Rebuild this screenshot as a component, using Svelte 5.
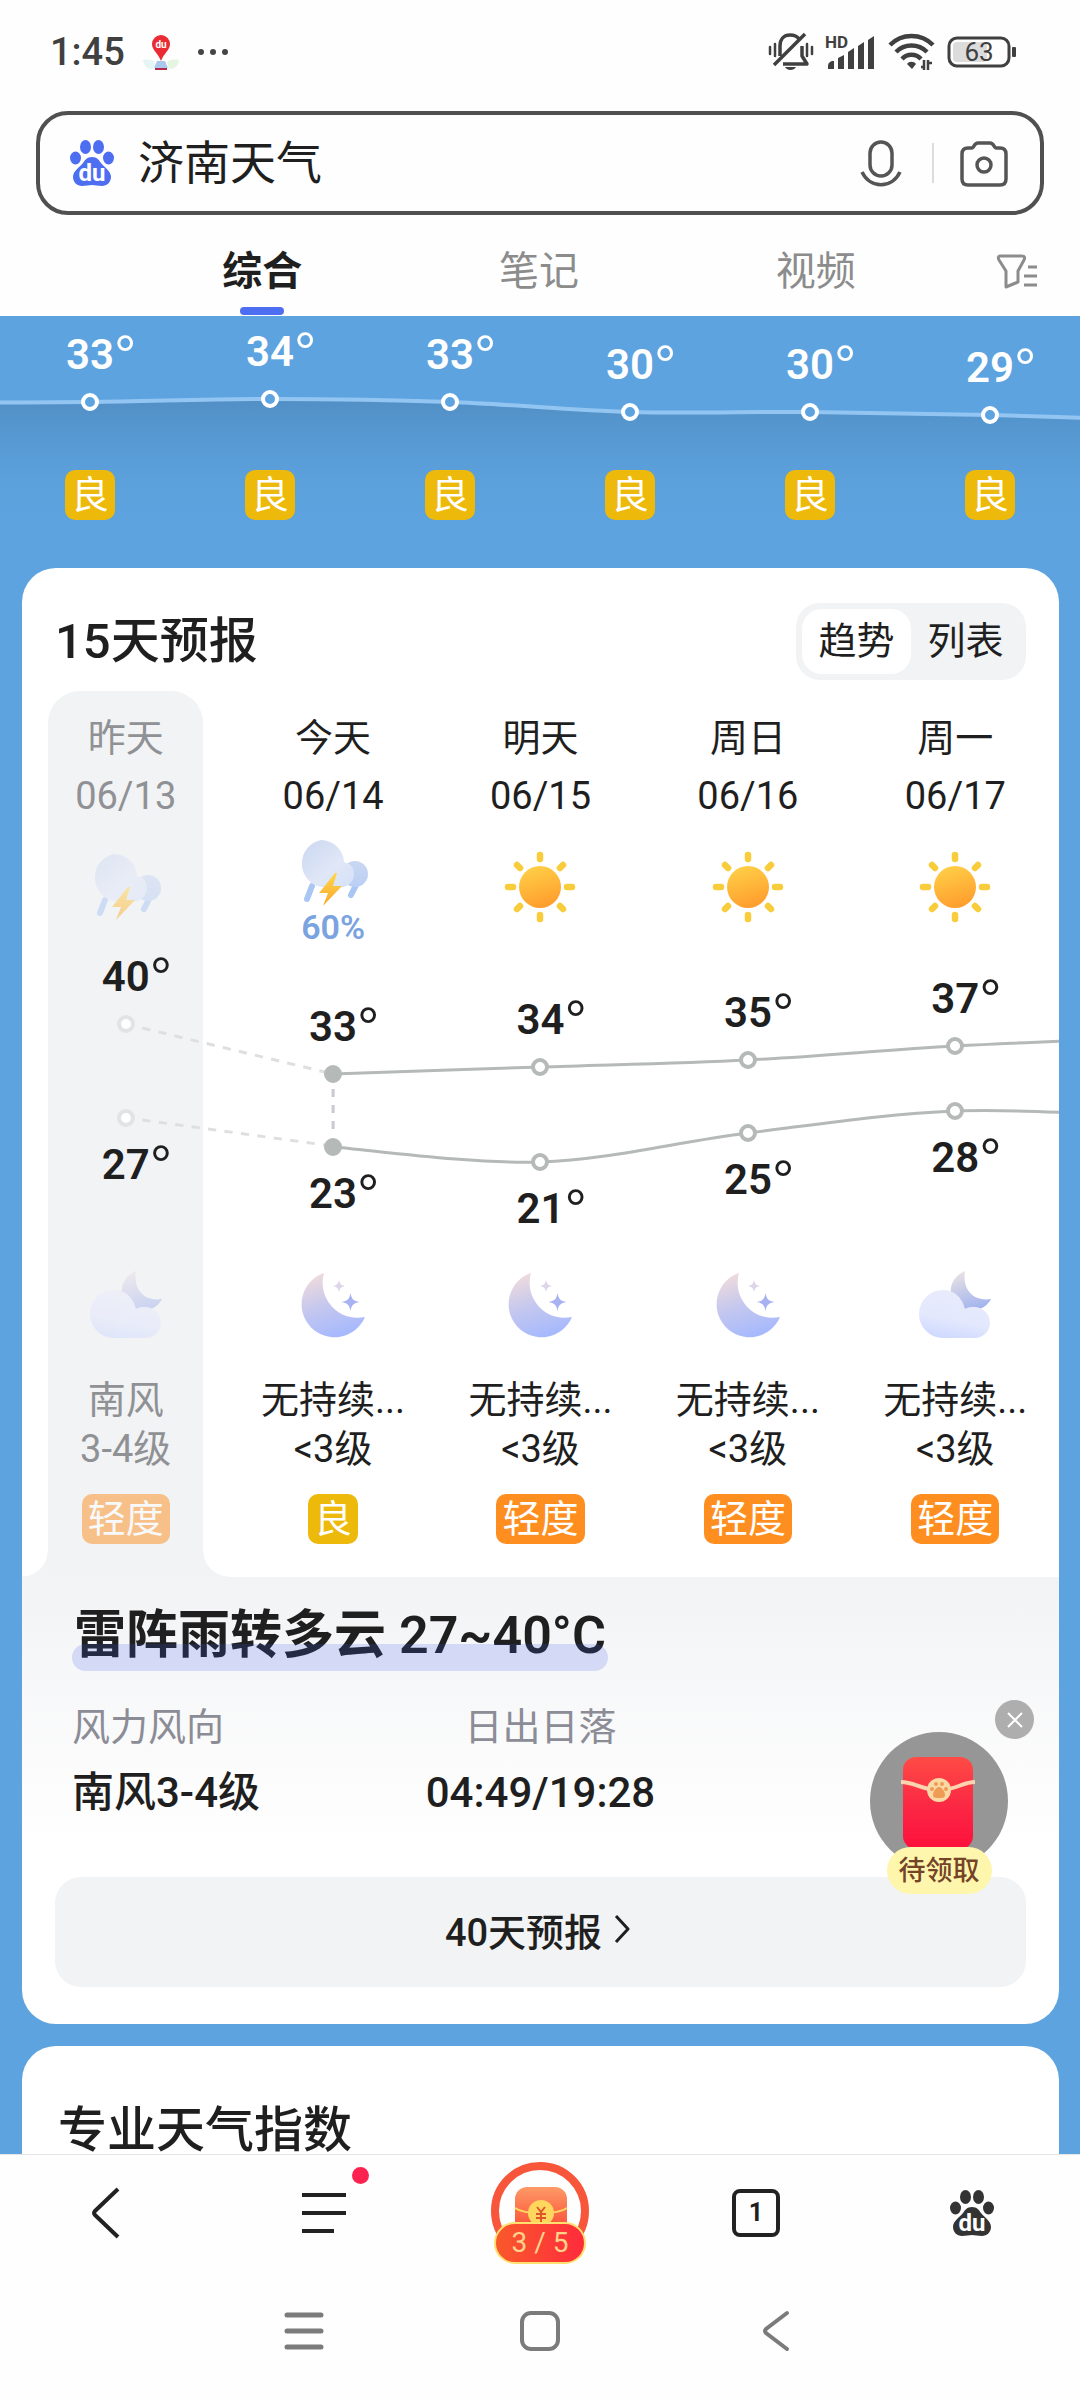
<script>
    let query = $state("济南天气");
    let activeTab = $state("综合");
    let view = $state("趋势");
    let activeDay = $state(0);
    let showGift = $state(true);

    const tabs = ["综合", "笔记", "视频"];
    const views = ["趋势", "列表"];

    const hours = [
        { temp: 33, y: 86, air: "良" },
        { temp: 34, y: 83, air: "良" },
        { temp: 33, y: 86, air: "良" },
        { temp: 30, y: 96, air: "良" },
        { temp: 30, y: 96, air: "良" },
        { temp: 29, y: 99, air: "良" },
    ];

    const days = [
        { name: "昨天", date: "06/13", icon: "storm", high: 40, low: 27, highY: 79, lowY: 173, night: "cloud", wind: "南风", level: "3-4级", air: "轻度", past: true },
        { name: "今天", date: "06/14", icon: "storm", rain: "60%", high: 33, low: 23, highY: 129, lowY: 202, night: "moon", wind: "无持续...", level: "<3级", air: "良", today: true },
        { name: "明天", date: "06/15", icon: "sun", high: 34, low: 21, highY: 122, lowY: 217, night: "moon", wind: "无持续...", level: "<3级", air: "轻度" },
        { name: "周日", date: "06/16", icon: "sun", high: 35, low: 25, highY: 115, lowY: 188, night: "moon", wind: "无持续...", level: "<3级", air: "轻度" },
        { name: "周一", date: "06/17", icon: "sun", high: 37, low: 28, highY: 101, lowY: 166, night: "cloud", wind: "无持续...", level: "<3级", air: "轻度" },
    ];

    // smooth curve through evenly spaced points
    function curve(points) {
        let d = `M${points[0][0]} ${points[0][1]}`;
        for (let i = 0; i < points.length - 1; i++) {
            const a = points[i];
            const b = points[i + 1];
            const prev = points[i - 1] || a;
            const next = points[i + 2] || b;
            const c1 = [a[0] + (b[0] - prev[0]) / 6, a[1] + (b[1] - prev[1]) / 6];
            const c2 = [b[0] - (next[0] - a[0]) / 6, b[1] - (next[1] - a[1]) / 6];
            d += ` C${c1.join(" ")} ${c2.join(" ")} ${b.join(" ")}`;
        }
        return d;
    }

    const hourLine = curve([
        [-90, 87],
        ...hours.map((h, i) => [90 + i * 180, h.y]),
        [1170, 105],
    ]);

    const dayX = (i) => 100 + i * 200;
    const futureDays = days.slice(1);
    const highLine = curve([...futureDays.map((d, i) => [dayX(i + 1), d.highY]), [1100, 92]]);
    const lowLine = curve([...futureDays.map((d, i) => [dayX(i + 1), d.lowY]), [1100, 172]]);
</script>

{#snippet paw(color)}
    <svg class="paw" viewBox="0 0 44 46" aria-hidden="true">
        <g fill={color}>
            <ellipse cx="15.500" cy="7" rx="5.500" ry="7" />
            <ellipse cx="28.500" cy="7" rx="5.500" ry="7" />
            <ellipse cx="5.500" cy="18" rx="5.500" ry="6.500" />
            <ellipse cx="38.500" cy="18" rx="5.500" ry="6.500" />
            <path d="M22 17c5 0 7 3 9 6 3 4 10 8 10 14 0 5-4 9-9 9-4 0-7-1-10-1s-6 1-10 1c-5 0-9-4-9-9 0-6 7-10 10-14 2-3 4-6 9-6z" />
        </g>
        <text x="22" y="41" text-anchor="middle" fill="#fff">du</text>
    </svg>
{/snippet}

{#snippet weatherIcon(name)}
    <svg class="weather-icon" viewBox="0 0 72 72" aria-hidden="true">
        {#if name === "storm"}
            <path d="M15 49l-5 13M60 46l-6 12" stroke="#a9c6f4" stroke-width="6" stroke-linecap="round" />
            <circle cx="58" cy="37" r="13" fill="url(#puff)" />
            <path d="M24 3a23 23 0 0 1 23 22c8 2 10 7 10 12 0 7-5 12-11 13H24a24 24 0 0 1 0-47z" fill="url(#cloud)" />
            <path d="M38 36L22 56h9l-5 13 19-20h-9l4-13z" fill="url(#bolt)" />
        {:else if name === "sun"}
            <path
                d="M36 4v4M36 64v4M4 36h5M63 36h5M13 14l3 3M56 55l3 3M59 14l-3 3M16 55l-3 3"
                stroke="#f8cc3a"
                stroke-width="6.500"
                stroke-linecap="round"
            />
            <circle cx="36" cy="36" r="21" fill="url(#sun)" />
        {:else if name === "moon"}
            <path d="M27 4A33 33 0 1 0 68 48A35 35 0 0 1 27 4z" fill="url(#moon)" />
            <path d="M53.500 24c1 6 3 8 9 9-6 1-8 3-9 9-1-6-3-8-9-9 6-1 8-3 9-9z" fill="#a7b2f2" />
            <path d="M42 11c1 4 2 5 6 6-4 1-5 2-6 6-1-4-2-5-6-6 4-1 5-2 6-6z" fill="#dcd6e8" />
        {:else}
            <path d="M46 2C24 11 28 42 54 42C62 41 69 36 72 30C53 33 43 19 46 2z" fill="url(#moon-small)" />
            <path d="M24 21c11 0 19 7 22 19 3-2 6-2 9-2 9 0 16 7 16 16 0 8-7 15-15 15H24a24 24 0 0 1 0-48z" fill="url(#night-cloud)" />
        {/if}
    </svg>
{/snippet}

{#snippet temp(value)}
    <span class="temp">{value}<span class="degree">°</span></span>
{/snippet}

<svg class="defs" aria-hidden="true">
    <defs>
        <linearGradient id="cloud" x1="0" y1="0" x2="1" y2="1">
            <stop offset="0" stop-color="#cbd8f1" />
            <stop offset="0.600" stop-color="#e0e7f7" />
            <stop offset="1" stop-color="#d5e1f8" />
        </linearGradient>
        <linearGradient id="puff" x1="0" y1="0" x2="0" y2="1">
            <stop offset="0" stop-color="#cad7f1" />
            <stop offset="1" stop-color="#bacff5" />
        </linearGradient>
        <linearGradient id="bolt" x1="0" y1="0" x2="0" y2="1">
            <stop offset="0" stop-color="#ffd84a" />
            <stop offset="1" stop-color="#fba62f" />
        </linearGradient>
        <linearGradient id="sun" x1="0.300" y1="0" x2="0.600" y2="1">
            <stop offset="0" stop-color="#ffcf47" />
            <stop offset="1" stop-color="#ff9c2c" />
        </linearGradient>
        <linearGradient id="moon" x1="0.200" y1="0" x2="0.500" y2="1">
            <stop offset="0" stop-color="#f2dcdb" />
            <stop offset="0.500" stop-color="#c6c8ee" />
            <stop offset="1" stop-color="#a6b9fd" />
        </linearGradient>
        <linearGradient id="moon-small" x1="0.300" y1="0" x2="0.600" y2="1">
            <stop offset="0" stop-color="#e9e1e4" />
            <stop offset="0.500" stop-color="#c3c9e9" />
            <stop offset="1" stop-color="#a0b2ee" />
        </linearGradient>
        <linearGradient id="night-cloud" x1="0.600" y1="0" x2="0.300" y2="1">
            <stop offset="0" stop-color="#e9ebfb" />
            <stop offset="0.600" stop-color="#e3e8fd" />
            <stop offset="1" stop-color="#ced9ff" />
        </linearGradient>
        <linearGradient id="envelope" x1="0" y1="0" x2="0" y2="1">
            <stop offset="0" stop-color="#ff4b45" />
            <stop offset="0.500" stop-color="#fb2a44" />
            <stop offset="1" stop-color="#fe0f3c" />
        </linearGradient>
        <linearGradient id="packet" x1="0" y1="0" x2="0" y2="1">
            <stop offset="0" stop-color="#ff9a66" />
            <stop offset="1" stop-color="#f8402f" />
        </linearGradient>
        <linearGradient id="shade" x1="0" y1="0" x2="0" y2="1">
            <stop offset="0" stop-color="#4f8bc0" stop-opacity="0.850" />
            <stop offset="1" stop-color="#5ba3de" stop-opacity="0" />
        </linearGradient>
    </defs>
</svg>

<div class="app">
    <header>
        <div class="status-bar">
            <span class="clock">1:45</span>
            <svg class="map-pin" viewBox="0 0 36 36" aria-hidden="true">
                <path d="M0 25c6-1 10 0 12 2l-2 7c-6 0-9-3-10-9z" fill="#e4f5f3" />
                <path d="M36 25c-6-1-10 0-12 2l2 7c6 0 9-3 10-9z" fill="#e6f4e2" />
                <path d="M14 26h8l3 7H11z" fill="#a9c8ec" />
                <path d="M12 33h12v2H12z" fill="#b5284a" />
                <path d="M18 0a9 9 0 0 1 9 9c0 6-6 9-9 17-3-8-9-11-9-17a9 9 0 0 1 9-9z" fill="#ea2b33" />
                <text x="18" y="13" text-anchor="middle" fill="#fff">du</text>
            </svg>
            <svg class="more" viewBox="0 0 32 8" fill="#454545" aria-hidden="true">
                <circle cx="4" cy="4" r="3" /><circle cx="16" cy="4" r="3" /><circle cx="28" cy="4" r="3" />
            </svg>
            <div class="status-icons">
                <svg width="46" height="40" viewBox="0 0 46 40" fill="none" stroke="#404040" stroke-width="3.500" aria-hidden="true">
                    <path d="M12 24V14C12 7 16 3 22 3c4 0 7 1 9 4M34 14v10l5 8H15M6 33L37 2" stroke-linejoin="round" />
                    <path d="M2 15v7M7 12v12M39 12v12M44 15v7" stroke-width="2.500" stroke-linecap="round" />
                    <path d="M17 35h11c-2 4-9 4-11 0z" fill="#404040" stroke="none" />
                </svg>
                <svg width="52" height="40" viewBox="0 -4 52 40" fill="#404040" aria-hidden="true">
                    <text x="0" y="12">HD</text>
                    <path d="M3 33v-3c0-3 2-5 6-5v8zM13 33V22l6-3v14zM23 33V16l6-4v21zM33 33V10l6-4v27zM43 33V4l6-4v33z" />
                </svg>
                <svg width="48" height="38" viewBox="0 0 48 38" fill="none" stroke="#404040" stroke-width="4.500" aria-hidden="true">
                    <path d="M2 12a30 30 0 0 1 43 0M8 19a22 22 0 0 1 31 0M14 26a13 13 0 0 1 19 0" />
                    <path d="M19 31c2-3 7-3 9 0l-4 5z" fill="#404040" stroke="none" />
                    <path d="M36 27v10M33 34h3M40 37V27M40 30h4" stroke-width="2.500" />
                </svg>
                <svg class="battery" width="70" height="32" viewBox="0 0 70 32" aria-hidden="true">
                    <rect x="6" y="6" width="34" height="20" rx="4" fill="#dcdcdc" />
                    <rect x="2" y="2" width="60" height="28" rx="8" fill="none" stroke="#404040" stroke-width="3" />
                    <rect x="65" y="11" width="4" height="10" rx="1" fill="#404040" />
                    <text x="32" y="25" text-anchor="middle" fill="#404040">63</text>
                </svg>
            </div>
        </div>

        <form class="search" onsubmit={(e) => e.preventDefault()}>
            {@render paw("#4e6ef2")}
            <input type="text" aria-label="搜索" bind:value={query} />
            <button type="button" class="icon-button" aria-label="语音搜索">
                <svg width="44" height="48" viewBox="0 0 44 48" fill="none" stroke="#555" stroke-width="3.500" aria-hidden="true">
                    <rect x="11" y="3" width="22" height="34" rx="11" />
                    <path d="M3 33c8 17 30 17 38 0" />
                </svg>
            </button>
            <span class="divider"></span>
            <button type="button" class="icon-button" aria-label="拍照搜索">
                <svg width="48" height="48" viewBox="0 0 48 48" fill="none" stroke="#555" stroke-width="3.500" aria-hidden="true">
                    <path d="M8 9h4c2 0 2-5 6-5h12c4 0 4 5 6 5h4c4 0 6 2 6 6v25c0 4-2 6-6 6H8c-4 0-6-2-6-6V15c0-4 2-6 6-6z" />
                    <circle cx="24" cy="26" r="7" />
                </svg>
            </button>
        </form>

        <nav class="tabs">
            {#each tabs as tab}
                <button class="tab" class:active={tab === activeTab} onclick={() => (activeTab = tab)}>{tab}</button>
            {/each}
            <button class="filter" aria-label="筛选">
                <svg width="42" height="38" viewBox="0 0 42 38" fill="none" stroke="#8c8c8c" stroke-width="3" aria-hidden="true">
                    <path d="M4 3h22c3 0 3 2 2 4l-6 11v11l-12 5V18L3 7C2 5 2 3 4 3z" stroke-linejoin="round" />
                    <path d="M32 14h9M28 23h13M28 32h13" />
                </svg>
            </button>
        </nav>
    </header>

    <main>
        <section class="hourly">
            <svg class="hour-chart" viewBox="0 0 1080 210" preserveAspectRatio="none" aria-hidden="true">
                <path d={`${hourLine} V210 H-90z`} fill="url(#shade)" />
                <path d={hourLine} fill="none" stroke="#93c5f2" stroke-width="4" vector-effect="non-scaling-stroke" />
            </svg>
            {#each hours as hour}
                <div class="hour">
                    <div class="hour-point" style="padding-top: {hour.y - 71}px">
                        {@render temp(hour.temp)}
                        <span class="dot"></span>
                    </div>
                    <span class="badge">{hour.air}</span>
                </div>
            {/each}
        </section>

        <section class="card forecast">
            <div class="card-head">
                <h2>15天预报</h2>
                <div class="switch">
                    {#each views as name}
                        <button class:selected={view === name} onclick={() => (view = name)}>{name}</button>
                    {/each}
                </div>
            </div>

            <div class="days">
                {#each days as day, i}
                    <div class="day" class:past={day.past} class:today={day.today} class:active={i === activeDay}>
                        <span class="day-name">{day.name}</span>
                        <span class="day-name">{day.date}</span>
                        <div class="day-icon">
                            {@render weatherIcon(day.icon)}
                            {#if day.rain}
                                <span class="rain">{day.rain}</span>
                            {/if}
                        </div>
                        <div class="temps">
                            <div class="point high" style="top: {day.highY}px">
                                {@render temp(day.high)}
                                <span class="dot"></span>
                            </div>
                            <div class="point low" style="top: {day.lowY}px">
                                <span class="dot"></span>
                                {@render temp(day.low)}
                            </div>
                        </div>
                        {@render weatherIcon(day.night)}
                        <p class="wind">{day.wind}<br />{day.level}</p>
                        <span class="badge" class:light={day.air === "轻度"}>{day.air}</span>
                    </div>
                {/each}
                <svg class="day-chart" viewBox="0 0 1000 324" preserveAspectRatio="none" aria-hidden="true">
                    <g fill="none" stroke-width="3">
                        <path d="M116 83L292 127M116 175L292 200" stroke="#dedfe0" stroke-dasharray="8 8" />
                        <path d="M300 144V188" stroke="#cbcccf" stroke-dasharray="8 8" />
                        <path d={highLine} stroke="#b5b9b8" />
                        <path d={lowLine} stroke="#b5b9b8" />
                    </g>
                </svg>
            </div>

            <div class="detail">
                <h3>雷阵雨转多云 <span>27~40°C</span></h3>
                <dl>
                    <div>
                        <dt>风力风向</dt>
                        <dd>南风3-4级</dd>
                    </div>
                    <div class="sunrise">
                        <dt>日出日落</dt>
                        <dd>04:49/19:28</dd>
                    </div>
                </dl>
            </div>

            <button class="long-forecast">
                40天预报
                <svg width="16" height="30" viewBox="0 0 16 30" fill="none" stroke="#1f1f1f" stroke-width="3" aria-hidden="true">
                    <path d="M2 2l12 13L2 28" stroke-linejoin="round" />
                </svg>
            </button>
        </section>

        <section class="card indices">
            <h2>专业天气指数</h2>
        </section>
    </main>

    {#if showGift}
        <aside class="gift">
            <button class="gift-open">
                <svg width="138" height="138" viewBox="0 0 138 138" aria-hidden="true">
                    <circle cx="69" cy="69" r="69" fill="#969696" />
                    <rect x="33" y="25" width="70" height="92" rx="13" fill="url(#envelope)" />
                    <path d="M31 50c14 0 20 8 38 8s23-8 36-8" fill="none" stroke="#fbd3ae" stroke-width="4" />
                    <circle cx="69" cy="58" r="12" fill="#fbd9a4" />
                    <g fill="#ef9a55">
                        <circle cx="66" cy="52" r="2" /><circle cx="72" cy="52" r="2" />
                        <circle cx="62" cy="57" r="2" /><circle cx="76" cy="57" r="2" />
                        <path d="M69 55c3 0 6 5 6 8s-3 3-6 3-6 0-6-3 3-8 6-8z" />
                    </g>
                </svg>
                <span>待领取</span>
            </button>
            <button class="gift-close" aria-label="关闭" onclick={() => (showGift = false)}>
                <svg width="16" height="16" viewBox="0 0 16 16" stroke="#fff" stroke-width="2" aria-hidden="true">
                    <path d="M1 1l14 14M15 1L1 15" />
                </svg>
            </button>
        </aside>
    {/if}

    <footer>
        <nav class="toolbar">
            <button aria-label="返回">
                <svg width="36" height="52" viewBox="0 0 36 52" fill="none" stroke="#222" stroke-width="4" aria-hidden="true">
                    <path d="M28 2L5 24q-2 2 0 4l23 22" />
                </svg>
            </button>
            <button aria-label="菜单" class="menu">
                <svg width="44" height="44" viewBox="0 0 44 44" stroke="#222" stroke-width="4" aria-hidden="true">
                    <path d="M0 4h44M0 22h44M0 40h32" />
                </svg>
                <span class="red-dot"></span>
            </button>
            <button class="reward">
                <svg width="98" height="98" viewBox="0 0 98 98" aria-hidden="true">
                    <circle cx="49" cy="49" r="45" fill="none" stroke="#f8563b" stroke-width="8" />
                    <rect x="24" y="25" width="52" height="50" rx="12" fill="url(#packet)" />
                    <path d="M24 46c10 7 42 7 52 0" fill="none" stroke="#ffd75e" stroke-width="2" />
                    <circle cx="50" cy="51" r="13" fill="#ffd75e" />
                    <path d="M46 45l4 5 4-5M50 50v11M45 52h10M45 56h10" fill="none" stroke="#e0552a" stroke-width="2" />
                </svg>
                <span>3 / 5</span>
            </button>
            <button class="windows"><span>1</span></button>
            <button aria-label="百度首页">{@render paw("#333")}</button>
        </nav>
        <nav class="system">
            <button aria-label="最近任务">
                <svg width="40" height="40" viewBox="0 0 40 40" stroke="#7b7b7b" stroke-width="5" stroke-linecap="round" aria-hidden="true">
                    <path d="M3 4h34M3 20h34M3 36h34" />
                </svg>
            </button>
            <button aria-label="主屏幕">
                <svg width="42" height="42" viewBox="0 0 42 42" fill="none" stroke="#7b7b7b" stroke-width="4" aria-hidden="true">
                    <rect x="3" y="3" width="36" height="36" rx="9" />
                </svg>
            </button>
            <button aria-label="后退">
                <svg width="28" height="42" viewBox="0 0 28 42" fill="none" stroke="#7b7b7b" stroke-width="4" stroke-linecap="round" aria-hidden="true">
                    <path d="M25 3L4 19q-2 2 0 4l21 16" />
                </svg>
            </button>
        </nav>
    </footer>
</div>

<style>
    :global(body) {
        margin: 0;
        background: #fdfdfd;
    }

    .app {
        position: relative;
        display: flex;
        flex-direction: column;
        height: 100vh;
        overflow: hidden;
        color: #1f1f1f;
        font-family: Roboto, "Noto Sans CJK SC", sans-serif;
        font-size: 38px;
    }

    button {
        margin: 0;
        padding: 0;
        border: 0;
        background: none;
        color: inherit;
        font: inherit;
        cursor: pointer;
    }

    svg {
        display: block;
    }

    h2,
    h3,
    p,
    dl,
    dd {
        margin: 0;
    }

    .defs {
        position: absolute;
        width: 0;
        height: 0;
    }

    header,
    footer {
        flex: none;
        background: #fefefe;
    }

    /* status bar */
    .status-bar {
        display: flex;
        align-items: center;
        height: 103px;
        padding: 0 63px 0 50px;
    }

    .clock {
        color: #404040;
        font-size: 38px;
        font-weight: 500;
    }

    .map-pin {
        width: 36px;
        height: 36px;
        margin: 2px 18px 0;
    }

    .map-pin text {
        font-size: 10px;
        font-weight: 700;
    }

    .more {
        width: 32px;
    }

    .status-icons {
        display: flex;
        align-items: center;
        gap: 11px;
        margin-left: auto;
    }

    .status-icons text {
        font-size: 17px;
        font-weight: 700;
    }

    .status-icons .battery text {
        font-size: 26px;
        font-weight: 400;
    }

    /* search */
    .search {
        display: flex;
        align-items: center;
        box-sizing: border-box;
        height: 104px;
        margin: 8px 36px 0;
        padding: 0 32px 0 30px;
        border: 4px solid #505050;
        border-radius: 32px;
    }

    .paw {
        flex: none;
        width: 44px;
        height: 46px;
        overflow: visible;
    }

    .paw text {
        font-size: 24px;
        font-weight: 700;
    }

    .search input {
        flex: 1;
        min-width: 0;
        margin-left: 24px;
        padding: 0 0 8px;
        border: 0;
        outline: 0;
        background: none;
        color: #1f1f1f;
        font: inherit;
        font-size: 46px;
    }

    .divider {
        width: 2px;
        height: 40px;
        margin: 0 26px 0 29px;
        background: #dcdcdc;
    }

    /* tabs */
    .tabs {
        display: flex;
        height: 101px;
        padding-left: 124px;
    }

    .tab {
        display: flex;
        flex: 1;
        flex-direction: column;
        align-items: center;
        padding-top: 28px;
        color: #8c8c8c;
        font-size: 40px;
        line-height: 58px;
    }

    .tab.active {
        color: #1f1f1f;
        font-weight: 700;
    }

    .tab.active::after {
        content: "";
        width: 44px;
        height: 8px;
        margin-top: 6px;
        border-radius: 4px;
        background: #4e6ef2;
    }

    .filter {
        display: flex;
        flex: none;
        align-items: center;
        justify-content: center;
        width: 126px;
        padding-top: 12px;
    }

    main {
        flex: 1;
        min-height: 0;
        overflow: hidden;
        background: #5da3df;
    }

    /* shared weather pieces */
    .temp {
        position: relative;
        font-size: 42px;
        font-weight: 600;
        line-height: 48px;
    }

    .degree {
        position: absolute;
        top: 0;
        left: 100%;
        font-family: "Liberation Sans", sans-serif;
        font-size: 56px;
        font-weight: 400;
    }

    .dot {
        box-sizing: border-box;
        width: 18px;
        height: 18px;
        border: 4px solid #b5b9b8;
        border-radius: 50%;
        background: #fff;
    }

    .badge {
        padding: 0 6px;
        border-radius: 10px;
        background: #edb90a;
        color: #fff;
        font-size: 38px;
        line-height: 50px;
    }

    .badge.light {
        background: #fe8e1f;
    }

    .weather-icon {
        flex: none;
        width: 72px;
        height: 72px;
    }

    /* hourly strip */
    .hourly {
        position: relative;
        display: grid;
        grid-template-columns: repeat(6, 1fr);
        padding-bottom: 48px;
    }

    .hour-chart {
        position: absolute;
        top: 0;
        left: 0;
        width: 100%;
        height: 210px;
    }

    .hour {
        position: relative;
        display: flex;
        flex-direction: column;
        align-items: center;
        color: #fff;
    }

    .hour-point {
        display: flex;
        flex-direction: column;
        align-items: center;
        gap: 14px;
        box-sizing: border-box;
        height: 154px;
    }

    .hour .dot {
        border-color: #fff;
        background: #5da3df;
    }

    /* cards */
    .card {
        margin: 0 21px 22px 22px;
        border-radius: 34px;
        background: #fff;
    }

    .card h2 {
        font-size: 49px;
        font-weight: 500;
        line-height: 50px;
    }

    .forecast {
        padding-bottom: 37px;
    }

    .card-head {
        display: flex;
        align-items: center;
        justify-content: space-between;
        padding: 35px 33px 11px;
    }

    .switch {
        display: flex;
        padding: 6px;
        border-radius: 24px;
        background: #f1f3f5;
    }

    .switch button {
        width: 109px;
        border-radius: 20px;
        line-height: 65px;
    }

    .switch .selected {
        background: #fff;
    }

    /* daily trend */
    .days {
        position: relative;
        display: grid;
        grid-template-columns: repeat(5, 1fr);
    }

    .day {
        position: relative;
        display: flex;
        flex-direction: column;
        align-items: center;
        padding: 18px 0 33px;
    }

    .day > * {
        position: relative;
        z-index: 2;
    }

    .day.active::before {
        content: "";
        position: absolute;
        z-index: 0;
        inset: 0 26px;
        border-radius: 32px 32px 0 0;
        background: #f2f3f5;
    }

    /* flares where the selected column runs into the detail panel */
    .day.active::after {
        content: "";
        position: absolute;
        right: 0;
        bottom: 0;
        left: 0;
        height: 26px;
        background:
            radial-gradient(circle at 0 0, transparent 25px, #f2f3f5 26px) left / 26px 26px no-repeat,
            radial-gradient(circle at 100% 0, transparent 25px, #f2f3f5 26px) right / 26px 26px no-repeat;
    }

    .day-name {
        line-height: 58px;
    }

    .day-icon {
        display: flex;
        flex-direction: column;
        align-items: center;
        justify-content: flex-end;
        height: 120px;
    }

    .day-icon .weather-icon:last-child {
        margin-bottom: 22px;
    }

    .rain {
        color: #7ba3e0;
        font-size: 34px;
        font-weight: 600;
        line-height: 36px;
    }

    .temps {
        align-self: stretch;
        height: 324px;
    }

    .point {
        position: absolute;
        left: 0;
        right: 0;
        display: flex;
        flex-direction: column;
        align-items: center;
        gap: 14px;
    }

    .point.high {
        margin-top: -71px;
    }

    .point.low {
        margin-top: -9px;
    }

    .past .day-name,
    .past .wind {
        color: #8f9194;
    }

    .past .weather-icon,
    .past .badge {
        opacity: 0.5;
    }

    .past .dot {
        border-color: #e2e3e5;
    }

    .today .dot {
        background: #b5b9b8;
    }

    .day-chart {
        position: absolute;
        z-index: 1;
        top: 254px;
        left: 0;
        width: 100%;
        height: 324px;
    }

    .wind {
        margin-top: 35px;
        line-height: 49px;
        text-align: center;
        white-space: nowrap;
    }

    .day .badge {
        margin-top: 20px;
    }

    /* day detail */
    .detail {
        padding: 18px 50px 55px;
        background: linear-gradient(#f2f3f5, #fff 90%);
    }

    .detail h3 {
        position: relative;
        width: fit-content;
        padding: 6px 2px 0;
        font-size: 52px;
        font-weight: 700;
        line-height: 70px;
    }

    .detail h3::after {
        content: "";
        position: absolute;
        right: 0;
        bottom: 0;
        left: 0;
        height: 27px;
        border-radius: 14px;
        background: rgba(60, 90, 240, 0.18);
    }

    .detail h3 span {
        font-weight: 600;
    }

    .detail dl {
        display: grid;
        grid-template-columns: repeat(3, 1fr);
        margin-top: 31px;
    }

    .detail dt {
        color: #8b8c96;
        line-height: 50px;
    }

    .detail dd {
        margin-top: 12px;
        font-size: 42px;
        font-weight: 500;
        line-height: 58px;
    }

    .sunrise {
        text-align: center;
    }

    .long-forecast {
        display: flex;
        align-items: center;
        justify-content: center;
        gap: 12px;
        box-sizing: border-box;
        width: calc(100% - 66px);
        height: 110px;
        margin: 0 33px;
        padding: 0 6px 6px 0;
        border-radius: 26px;
        background: #f2f3f5;
        font-weight: 500;
    }

    .indices {
        padding: 60px 36px;
    }

    /* floating red packet */
    .gift {
        position: absolute;
        right: 46px;
        bottom: 506px;
        width: 168px;
        height: 194px;
    }

    .gift-open {
        position: absolute;
        top: 32px;
        left: 4px;
        display: flex;
        flex-direction: column;
        align-items: center;
    }

    .gift-open span {
        margin-top: -23px;
        padding: 2px 12px 0;
        border-radius: 24px;
        background: #fef6ad;
        color: #754428;
        font-size: 27px;
        font-weight: 500;
        line-height: 45px;
    }

    .gift-close {
        position: absolute;
        top: 0;
        right: 0;
        display: grid;
        place-items: center;
        width: 39px;
        height: 39px;
        border-radius: 50%;
        background: #aeaeae;
    }

    /* bottom bars */
    .toolbar {
        display: grid;
        grid-template-columns: repeat(5, 1fr);
        height: 115px;
        border-top: 1px solid #e4e4e4;
    }

    .toolbar button {
        position: relative;
        display: flex;
        align-items: center;
        justify-content: center;
    }

    .red-dot {
        position: absolute;
        top: 12px;
        right: 63px;
        width: 17px;
        height: 17px;
        border-radius: 50%;
        background: #fd2350;
    }

    .toolbar .reward {
        flex-direction: column;
        justify-content: flex-start;
        padding-top: 7px;
    }

    .reward span {
        margin-top: -38px;
        padding: 0 16px;
        border: 2px solid #ffdf6e;
        border-radius: 22px;
        background: linear-gradient(90deg, #f9592c, #ff2b3c);
        color: #ffd28a;
        font-size: 28px;
        line-height: 38px;
    }

    .windows span {
        box-sizing: border-box;
        width: 48px;
        height: 48px;
        border: 4px solid #222;
        border-radius: 8px;
        font-size: 25px;
        font-weight: 700;
        line-height: 40px;
    }

    .system {
        display: flex;
        justify-content: center;
        height: 130px;
    }

    .system button {
        display: flex;
        align-items: center;
        justify-content: center;
        width: 236px;
        padding-bottom: 8px;
    }
</style>
